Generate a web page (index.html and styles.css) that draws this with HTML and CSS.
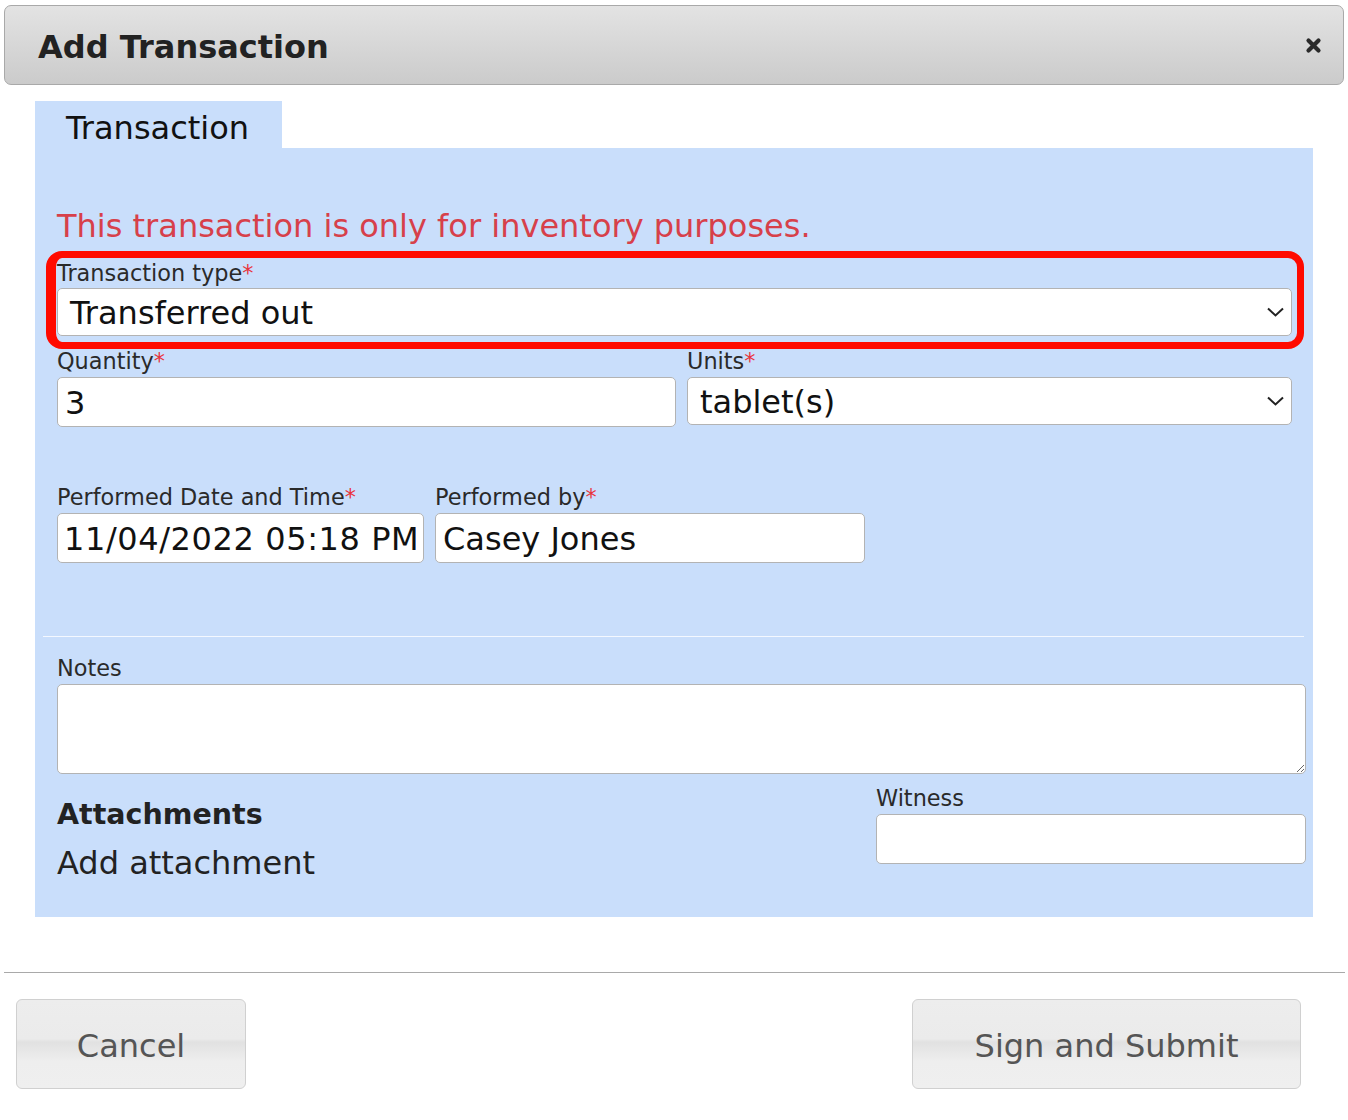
FILE: index.html
```html
<!DOCTYPE html>
<html lang="en">
<head>
<meta charset="utf-8">
<title>Add Transaction</title>
<link rel="stylesheet" href="styles.css">
</head>
<body>
<div class="dialog">
  <div class="titlebar">
    <span class="title">Add Transaction</span>
    <button class="close" type="button" aria-label="Close">
      <svg width="17" height="17" viewBox="0 0 17 17"><path d="M3.5 3.5 L13.5 13.5 M13.5 3.5 L3.5 13.5" stroke="#2a2a2a" stroke-width="4.2" stroke-linecap="round" fill="none"/></svg>
    </button>
  </div>
  <div class="content">
    <div class="tabs"><div class="tab">Transaction</div></div>
    <div class="panel">
      <p class="notice">This transaction is only for inventory purposes.</p>
      <div class="field field-type highlight">
        <label class="label">Transaction type<span class="req">*</span></label>
        <div class="select select-type"><span>Transferred out</span>
          <svg class="chev" width="17" height="10" viewBox="0 0 17 10"><path d="M1 1.5 L8.5 8.5 L16 1.5" stroke="#222" stroke-width="2" fill="none"/></svg>
        </div>
      </div>
      <div class="row row-qty">
        <div class="field f-qty">
          <label class="label">Quantity<span class="req">*</span></label>
          <input class="input" type="text" value="3">
        </div>
        <div class="field f-units">
          <label class="label">Units<span class="req">*</span></label>
          <div class="select select-units"><span>tablet(s)</span>
            <svg class="chev" width="17" height="10" viewBox="0 0 17 10"><path d="M1 1.5 L8.5 8.5 L16 1.5" stroke="#222" stroke-width="2" fill="none"/></svg>
          </div>
        </div>
      </div>
      <div class="row row-date">
        <div class="field f-date">
          <label class="label">Performed Date and Time<span class="req">*</span></label>
          <input class="input input-date" type="text" value="11/04/2022 05:18 PM">
        </div>
        <div class="field f-by">
          <label class="label">Performed by<span class="req">*</span></label>
          <input class="input" type="text" value="Casey Jones">
        </div>
      </div>
      <hr class="sep">
      <div class="field f-notes">
        <label class="label">Notes</label>
        <textarea class="textarea"></textarea>
      </div>
      <div class="row row-bottom">
        <div class="attach">
          <h3 class="attach-title">Attachments</h3>
          <div class="attach-add">Add attachment</div>
        </div>
        <div class="field f-witness">
          <label class="label">Witness</label>
          <input class="input" type="text" value="">
        </div>
      </div>
    </div>
  </div>
  <hr class="footer-sep">
  <div class="buttons">
    <button class="btn btn-cancel" type="button">Cancel</button>
    <button class="btn btn-submit" type="button">Sign and Submit</button>
  </div>
</div>
</body>
</html>
```
FILE: styles.css
```css
* { box-sizing: border-box; }
html, body { margin: 0; padding: 0; background: #fff; }
body {
  font-family: "DejaVu Sans", Verdana, sans-serif;
  color: #222;
}
.dialog { width: 1348px; }

.titlebar {
  margin: 5px 4px 0 4px;
  height: 80px;
  border: 1px solid #a9a9a9;
  border-radius: 7px;
  background: linear-gradient(#e3e3e3, #cbcbcb);
  display: flex;
  align-items: center;
  padding: 3px 21px 0 33px;
}
.title {
  flex: 1;
  font-weight: bold;
  font-size: 32px;
  line-height: 36px;
  color: #222;
}
.close {
  border: 0;
  background: none;
  padding: 0;
  width: 17px;
  height: 17px;
  display: flex;
  margin-top: -3px;
}

.content { margin: 16px 35px 0 35px; }
.tabs { display: flex; }
.tab {
  width: 247px;
  height: 47px;
  background: #c9defb;
  font-size: 32px;
  line-height: 36px;
  padding: 9px 0 0 31px;
  color: #111;
}
.panel {
  background: #c9defb;
  padding: 60px 7px 36px 22px;
}
.notice {
  margin: 0;
  font-size: 32px;
  line-height: 36px;
  color: #d7404a;
}
.field { display: flex; flex-direction: column; }
.label {
  font-size: 22.4px;
  line-height: 26px;
  color: #2a2a2a;
  margin-bottom: 3px;
}
.req { color: #e8343c; }

.field-type { margin-top: 16px; width: 1235px; position: relative; }
.field-type .label { margin-bottom: 2px; }
.highlight::after {
  content: "";
  position: absolute;
  left: -11px;
  right: -12px;
  top: -9px;
  bottom: -13px;
  border: 7px solid #ff0a00;
  border-left-width: 10px;
  border-radius: 16px;
  pointer-events: none;
}

.select {
  display: flex;
  align-items: center;
  justify-content: space-between;
  background: #fff;
  border: 1px solid #b3b3b3;
  border-radius: 5px;
  font-size: 32px;
  line-height: 36px;
  color: #111;
  padding: 1px 7px 0 12px;
}
.select-type { height: 48px; }
.select-units { height: 48px; }
.chev { flex: none; margin-top: -1px; }

.input {
  display: block;
  width: 100%;
  height: 50px;
  background: #fff;
  border: 1px solid #b3b3b3;
  border-radius: 5px;
  font-family: "DejaVu Sans", Verdana, sans-serif;
  font-size: 32px;
  color: #111;
  padding: 2px 7px 0 7px;
  margin: 0;
  outline: none;
}
.input-date { letter-spacing: 0.6px; padding-left: 6px; }

.row { display: flex; gap: 11px; }
.row-qty { margin-top: 12px; width: 1235px; }
.f-qty { width: 619px; }
.f-units { width: 605px; }
.row-date { margin-top: 57px; }
.f-date { width: 367px; }
.f-by { width: 430px; }

.sep {
  margin: 73px 2px 0 -14px;
  border: 0;
  border-top: 1px solid #f4f8ff;
  height: 0;
}
.f-notes { margin-top: 18px; }
.textarea {
  display: block;
  width: 100%;
  height: 90px;
  background: #fff;
  border: 1px solid #b3b3b3;
  border-radius: 5px;
  margin: 0;
  font-family: "DejaVu Sans", Verdana, sans-serif;
  font-size: 22px;
  outline: none;
}

.row-bottom {
  margin-top: 11px;
  justify-content: space-between;
  align-items: flex-start;
}
.attach { padding-top: 13px; }
.attach-title {
  margin: 0;
  font-size: 28.5px;
  line-height: 33px;
  font-weight: bold;
  color: #222;
}
.attach-add {
  margin-top: 14px;
  font-size: 32px;
  line-height: 36px;
  color: #222;
}
.f-witness { width: 430px; }

.footer-sep {
  margin: 55px 3px 0 4px;
  border: 0;
  border-top: 1px solid #a9a9a9;
  height: 0;
}
.buttons {
  display: flex;
  justify-content: space-between;
  margin: 26px 47px 0 16px;
}
.btn {
  height: 90px;
  border: 1px solid #d0d0d0;
  border-radius: 6px;
  background: linear-gradient(#ededed 0%, #ebebeb 44%, #e1e1e1 48%, #e6e6e6 56%, #eeeeee 70%, #efefef 100%);
  font-family: "DejaVu Sans", Verdana, sans-serif;
  font-size: 32px;
  line-height: 36px;
  color: #555;
  padding: 4px 0 0 0;
}
.btn-cancel { width: 230px; }
.btn-submit { width: 389px; }
```
